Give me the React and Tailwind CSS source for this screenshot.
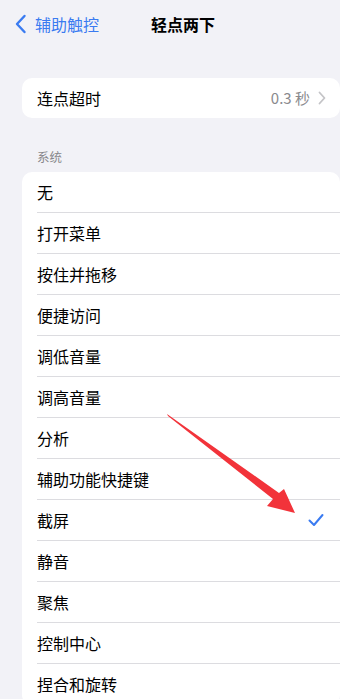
import React from 'react';

const items = [
  '无',
  '打开菜单',
  '按住并拖移',
  '便捷访问',
  '调低音量',
  '调高音量',
  '分析',
  '辅助功能快捷键',
  '截屏',
  '静音',
  '聚焦',
  '控制中心',
  '捏合和旋转',
];

const font = { fontFamily: '"Noto Sans CJK SC", "Noto Sans", sans-serif' };

const App = () => {
  return (
    <div className="relative h-[699px] w-[340px] overflow-hidden bg-[#f2f2f7] text-black" style={font}>
      {/* 顶部导航 */}
      <div className="flex h-[47px] items-center">
        <div className="flex items-center pl-[14px] text-[#3a7bf1]">
          <svg width="13" height="20" viewBox="0 0 13 20" fill="none">
            <path d="M10.5 2 L3 10 L10.5 18" stroke="#3a7bf1" strokeWidth="2.4" strokeLinecap="round" strokeLinejoin="round" />
          </svg>
          <span className="ml-[8px] text-[16px] leading-none">辅助触控</span>
        </div>
        <span className="ml-[52px] text-[16px] font-semibold leading-none">轻点两下</span>
      </div>

      {/* 连点超时 */}
      <div className="ml-[22px] mt-[31px] flex h-[40px] w-[318px] items-center rounded-[10px] bg-white pl-[15px] pr-[14px]">
        <span className="text-[16px]">连点超时</span>
        <span className="ml-auto text-[15px] text-[#8a8a8e]">0.3 秒</span>
        <svg className="ml-[8px]" width="8" height="14" viewBox="0 0 8 14" fill="none">
          <path d="M1.5 1.5 L6.5 7 L1.5 12.5" stroke="#c4c4c7" strokeWidth="1.8" strokeLinecap="round" strokeLinejoin="round" />
        </svg>
      </div>

      <div className="ml-[37px] mt-[33px] text-[12.5px] leading-none text-[#86868a]">系统</div>

      {/* 系统列表 */}
      <div className="ml-[22px] mt-[8px] w-[318px] rounded-[10px] bg-white">
        {items.map((label, i) => (
          <div key={label} className="pl-[15px]">
            <div className={`flex h-[41px] items-center pr-[16px] ${i < items.length - 1 ? 'border-b border-[#dcdce0]' : ''}`}>
              <span className="text-[16px]">{label}</span>
              {label === '截屏' && (
                <svg className="ml-auto" width="16" height="14" viewBox="0 0 16 14" fill="none">
                  <path d="M1.5 7.5 L6 12 L14.5 2" stroke="#3a7bf1" strokeWidth="2" strokeLinecap="round" strokeLinejoin="round" />
                </svg>
              )}
            </div>
          </div>
        ))}
      </div>

      {/* 红色箭头标注 */}
      <svg className="pointer-events-none absolute left-0 top-0" width="340" height="699" viewBox="0 0 340 699">
        <polygon points="167,414 279,493 284,489 295,513 267,506 273,499 168,416" fill="#f2333a" />
      </svg>
    </div>
  );
};

export default App;
